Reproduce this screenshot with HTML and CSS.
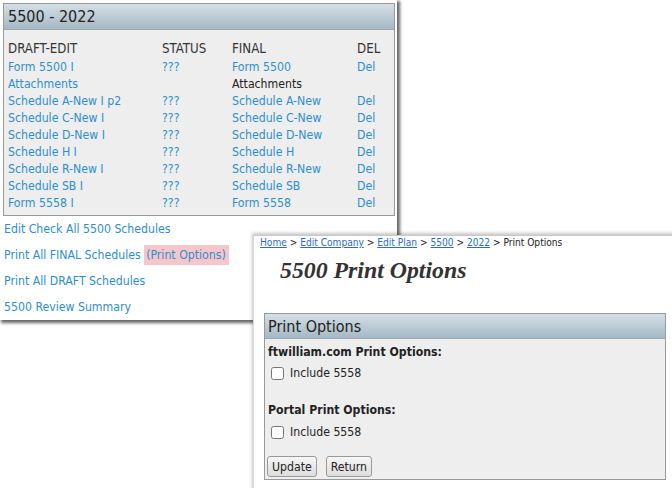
FILE: index.html
```html
<!DOCTYPE html>
<html>
<head>
<meta charset="utf-8">
<link rel="stylesheet" href="styles.css">
</head>
<body>
<div class="desk">
  <div class="win win-left">
    <div class="panel panel-main">
      <div class="panel-head">5500 - 2022</div>
      <div class="panel-body">
        <table class="grid">
          <tr class="th"><td class="c1">DRAFT-EDIT</td><td class="c2">STATUS</td><td class="c3">FINAL</td><td class="c4">DEL</td></tr>
          <tr><td><a>Form 5500 I</a></td><td><a>???</a></td><td><a>Form 5500</a></td><td><a>Del</a></td></tr>
          <tr><td><a>Attachments</a></td><td></td><td class="plain">Attachments</td><td></td></tr>
          <tr><td><a>Schedule A-New I p2</a></td><td><a>???</a></td><td><a>Schedule A-New</a></td><td><a>Del</a></td></tr>
          <tr><td><a>Schedule C-New I</a></td><td><a>???</a></td><td><a>Schedule C-New</a></td><td><a>Del</a></td></tr>
          <tr><td><a>Schedule D-New I</a></td><td><a>???</a></td><td><a>Schedule D-New</a></td><td><a>Del</a></td></tr>
          <tr><td><a>Schedule H I</a></td><td><a>???</a></td><td><a>Schedule H</a></td><td><a>Del</a></td></tr>
          <tr><td><a>Schedule R-New I</a></td><td><a>???</a></td><td><a>Schedule R-New</a></td><td><a>Del</a></td></tr>
          <tr><td><a>Schedule SB I</a></td><td><a>???</a></td><td><a>Schedule SB</a></td><td><a>Del</a></td></tr>
          <tr><td><a>Form 5558 I</a></td><td><a>???</a></td><td><a>Form 5558</a></td><td><a>Del</a></td></tr>
        </table>
      </div>
    </div>
    <ul class="actions">
      <li><a>Edit Check All 5500 Schedules</a></li>
      <li><a>Print All FINAL Schedules</a> <a class="hl">(Print Options)</a></li>
      <li><a>Print All DRAFT Schedules</a></li>
      <li><a>5500 Review Summary</a></li>
    </ul>
  </div>

  <div class="win win-right">
    <div class="crumbs"><a class="u">Home</a> &gt; <a class="u">Edit Company</a> &gt; <a class="u">Edit Plan</a> &gt; <a class="u">5500</a> &gt; <a class="u">2022</a> &gt; Print Options</div>
    <h1 class="title">5500 Print Options</h1>
    <div class="panel panel-opts">
      <div class="panel-head small">Print Options</div>
      <div class="panel-body opts">
        <div class="grp">ftwilliam.com Print Options:</div>
        <label class="chk"><input type="checkbox"><span>Include 5558</span></label>
        <div class="grp grp2">Portal Print Options:</div>
        <label class="chk"><input type="checkbox"><span>Include 5558</span></label>
        <div class="btns"><button class="btn">Update</button><button class="btn">Return</button></div>
      </div>
    </div>
  </div>
</div>
</body>
</html>
```

FILE: styles.css
```css
* { box-sizing: border-box; }
html, body { margin: 0; padding: 0; background: #fff; }
body {
  font-family: "DejaVu Sans Condensed", "DejaVu Sans", sans-serif;
  font-stretch: condensed;
  font-size: 12.2px;
  color: #222;
}
.desk { position: relative; width: 672px; height: 488px; overflow: hidden; }
a { color: #2d8ecf; text-decoration: none; }

.win { position: absolute; background: #fff; }
.win-left {
  left: 0; top: 0; width: 397px; height: 320px;
  padding: 3px 2px 0 3px;
  box-shadow: 2px 2px 3px 1px rgba(0,0,0,0.6);
}
.panel { border: 1px solid #999; background: #eee; }
.panel-head {
  height: 26px;
  padding: 0 4px;
  font-size: 16px;
  line-height: 26px;
  color: #222;
  background: linear-gradient(#d4dfe6, #a6b8c4);
  border-bottom: 1px solid #9aabb6;
}
.panel-main .panel-body { padding: 8px 0 3px 0; }
.grid { border-collapse: collapse; width: 100%; }
.grid td { padding: 0 0 0 4px; height: 17px; line-height: 17px; white-space: nowrap; vertical-align: middle; }
.grid .th td { height: 21px; font-size: 13.2px; color: #333; }
.grid .c1 { width: 154px; }
.grid .c2 { width: 70px; }
.grid .c3 { width: 125px; }
.grid .plain { color: #222; }

.actions { list-style: none; margin: 0; padding: 0 0 0 1px; }
.actions li { line-height: 26px; height: 26px; }
.hl { background: #f7c6cb; padding: 3px 3px 3px 2px; }

.win-right {
  left: 253px; top: 235px; width: 430px; height: 260px;
  border-top: 1px solid #c8c8c8;
  border-left: 1px solid #d8d8d8;
  box-shadow: -1px -2px 3px rgba(0,0,0,0.22);
  padding: 0 0 0 6px;
}
.crumbs { font-size: 10.1px; line-height: 14px; padding-top: 0; color: #222; }
.crumbs .u { color: #2a6ccf; text-decoration: underline; }
.title {
  margin: 6px 0 0 20px;
  font-family: "Liberation Serif", serif;
  font-style: italic; font-weight: bold;
  font-size: 23.8px; line-height: 28px;
  color: #333;
}
.panel-opts { margin: 29px 0 0 4px; width: 402px; height: 167px; }
.panel-head.small { height: 25px; line-height: 25px; font-size: 16px; padding-left: 3px; }
.opts { padding: 4px 0 0 3px; }
.grp { font-weight: bold; line-height: 18px; }
.grp2 { margin-top: 17px; }
.chk { display: flex; align-items: center; height: 22px; margin-top: 1px; padding-left: 1px; }
.grp2 + .chk { margin-top: 2px; }
.chk input { margin: 0 6px 0 2px; width: 13px; height: 13px; }
.btns { display: flex; gap: 9px; margin-top: 13px; margin-left: -1px; }
.btn {
  font-family: inherit; font-stretch: condensed; font-size: 12.2px; color: #222;
  height: 21px; padding: 0 4px;
  border: 1px solid #999; border-radius: 3px;
  background: linear-gradient(#f6f6f6, #dcdcdc);
}
```
